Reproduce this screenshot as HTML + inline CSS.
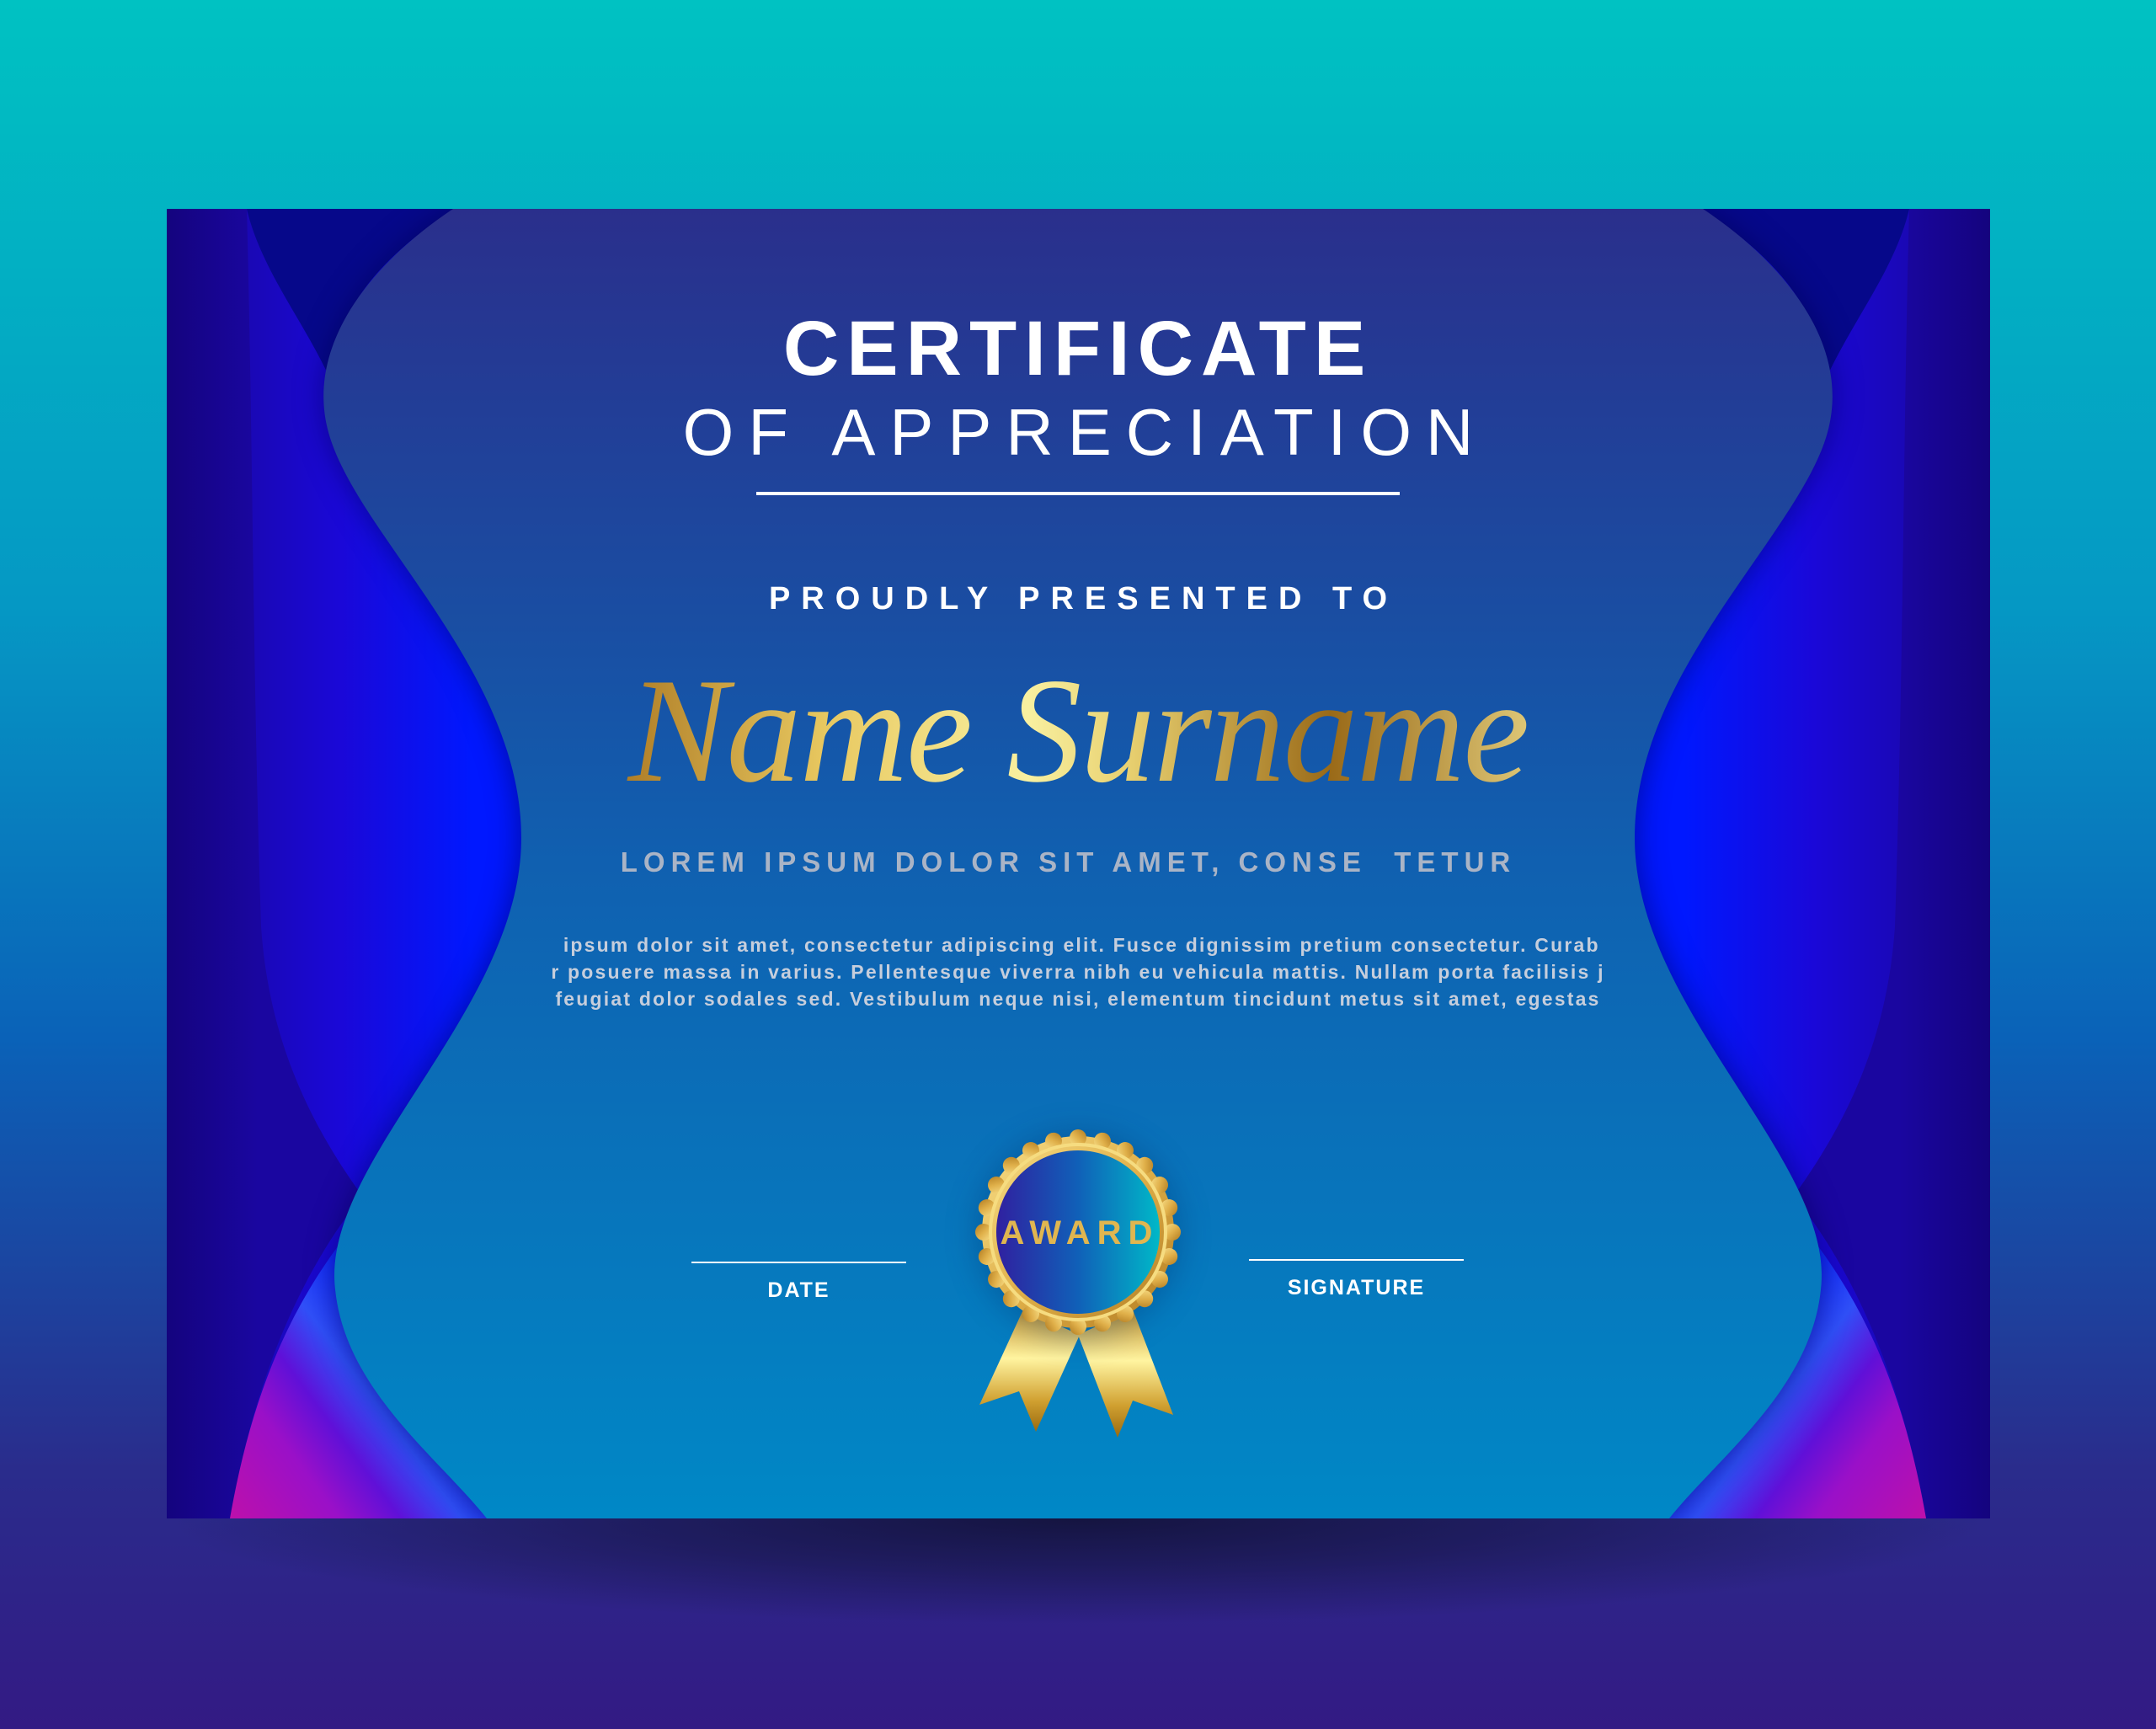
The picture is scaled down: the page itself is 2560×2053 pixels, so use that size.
<!DOCTYPE html>
<html><head><meta charset="utf-8">
<style>
html,body{margin:0;padding:0;}
body{width:2560px;height:2053px;position:relative;overflow:hidden;font-family:"Liberation Sans",sans-serif;}
.t{position:absolute;left:0;width:2560px;text-align:center;white-space:nowrap;}
</style></head><body>
<svg width="2560" height="2053" viewBox="0 0 2560 2053" style="position:absolute;left:0;top:0">
<defs>
<linearGradient id="bg" x1="0" y1="0" x2="0" y2="1">
<stop offset="0" stop-color="#00c2c2"/><stop offset="0.35" stop-color="#0598c4"/>
<stop offset="0.6" stop-color="#0a62b8"/><stop offset="0.85" stop-color="#2a2c8c"/><stop offset="1" stop-color="#331a84"/>
</linearGradient>
<linearGradient id="panel" x1="0" y1="0" x2="0" y2="1">
<stop offset="0" stop-color="#2a2f8c"/><stop offset="0.5" stop-color="#1060b0"/><stop offset="1" stop-color="#0088c6"/>
</linearGradient>
<linearGradient id="card" x1="0" y1="0" x2="1" y2="0">
<stop offset="0" stop-color="#14047e"/><stop offset="0.05" stop-color="#1a06a0"/><stop offset="0.95" stop-color="#1a06a0"/><stop offset="1" stop-color="#14047e"/>
</linearGradient>
<linearGradient id="wave" gradientUnits="userSpaceOnUse" x1="280" y1="0" x2="560" y2="0">
<stop offset="0" stop-color="#1a08b0"/><stop offset="0.45" stop-color="#1a08d8"/><stop offset="1" stop-color="#0018ff"/>
</linearGradient>
<linearGradient id="mag" gradientUnits="userSpaceOnUse" x1="250" y1="1790" x2="560" y2="1560">
<stop offset="0" stop-color="#c010a8"/><stop offset="0.3" stop-color="#9a10c8"/><stop offset="0.45" stop-color="#6010d8"/><stop offset="0.6" stop-color="#3050f8"/><stop offset="0.8" stop-color="#0a22ff"/><stop offset="1" stop-color="#0018ff"/>
</linearGradient>
<linearGradient id="gold" x1="0" y1="0" x2="1" y2="1">
<stop offset="0" stop-color="#f8e08a"/><stop offset="0.5" stop-color="#e0b04a"/><stop offset="1" stop-color="#b07a20"/>
</linearGradient>
<linearGradient id="rib" x1="0" y1="0" x2="0" y2="1">
<stop offset="0" stop-color="#c8962e"/><stop offset="0.4" stop-color="#fff4a0"/><stop offset="0.75" stop-color="#d0a030"/><stop offset="1" stop-color="#9a6a10"/>
</linearGradient>
<linearGradient id="medin" x1="0" y1="0" x2="1" y2="0">
<stop offset="0" stop-color="#3020a0"/><stop offset="0.5" stop-color="#1060b8"/><stop offset="1" stop-color="#00b8c8"/>
</linearGradient>
<radialGradient id="shd" cx="0.5" cy="0" r="0.5">
<stop offset="0" stop-color="#121238" stop-opacity="0.9"/><stop offset="0.5" stop-color="#121238" stop-opacity="0.5"/><stop offset="1" stop-color="#121238" stop-opacity="0"/>
</radialGradient>
<filter id="blur" x="-20%" y="-20%" width="140%" height="140%"><feGaussianBlur stdDeviation="18"/></filter>
<clipPath id="cc"><rect x="198" y="248" width="2165" height="1555"/></clipPath>
</defs>
<rect width="2560" height="2053" fill="url(#bg)"/>
<rect x="200" y="1803" width="2160" height="250" fill="url(#shd)"/>
<rect x="198" y="248" width="2165" height="1555" fill="url(#card)"/>
<g clip-path="url(#cc)">
<g id="side">
<path d="M293,248 L700,248 L700,1803 L273,1803 C300,1650 350,1520 430,1420 C380,1350 320,1250 310,1100 C300,800 300,500 293,248 Z" fill="url(#wave)"/>
<path d="M293,248 L540,248 C460,300 400,360 392,450 C360,380 310,320 293,248 Z" fill="#06088a"/>
<path d="M273,1803 C300,1650 350,1520 470,1400 L600,1380 L700,1803 Z" fill="url(#mag)"/>
</g>
<use href="#side" transform="translate(2560,0) scale(-1,1)"/>
<path d="M538,248 C430,320 360,420 392,520 C430,640 619,800 619,995 C619,1200 380,1380 398,1531 C410,1650 520,1730 578,1803 L1982,1803 C2040,1730 2150,1650 2162,1531 C2180,1380 1941,1200 1941,995 C1941,800 2130,640 2168,520 C2200,420 2130,320 2022,248 Z" fill="#001050" opacity="0.55" filter="url(#blur)"/>
<path d="M538,248 C430,320 360,420 392,520 C430,640 619,800 619,995 C619,1200 380,1380 398,1531 C410,1650 520,1730 578,1803 L1982,1803 C2040,1730 2150,1650 2162,1531 C2180,1380 1941,1200 1941,995 C1941,800 2130,640 2168,520 C2200,420 2130,320 2022,248 Z" fill="url(#panel)"/>
</g>
<!-- lines -->
<rect x="898" y="584" width="764" height="4" fill="#fff"/>
<rect x="821" y="1498" width="255" height="2" fill="#fff"/>
<rect x="1483" y="1495" width="255" height="2" fill="#fff"/>
<!-- medal -->
<path d="M1215,1555 L1163,1668 L1210,1652 L1230,1700 L1282,1585 Z" fill="url(#rib)"/>
<path d="M1345,1555 L1393,1680 L1345,1663 L1327,1707 L1280,1585 Z" fill="url(#rib)"/>
<circle cx="1280" cy="1466" r="122" fill="#003070" opacity="0.35" filter="url(#blur)"/>
<g fill="url(#gold)">
<circle cx="1280" cy="1463" r="114"/>
<g id="b"><circle cx="1392" cy="1463" r="10"/></g>
<use href="#b" transform="rotate(15 1280 1463)"/><use href="#b" transform="rotate(30 1280 1463)"/><use href="#b" transform="rotate(45 1280 1463)"/>
<use href="#b" transform="rotate(60 1280 1463)"/><use href="#b" transform="rotate(75 1280 1463)"/><use href="#b" transform="rotate(90 1280 1463)"/>
<use href="#b" transform="rotate(105 1280 1463)"/><use href="#b" transform="rotate(120 1280 1463)"/><use href="#b" transform="rotate(135 1280 1463)"/>
<use href="#b" transform="rotate(150 1280 1463)"/><use href="#b" transform="rotate(165 1280 1463)"/><use href="#b" transform="rotate(180 1280 1463)"/>
<use href="#b" transform="rotate(195 1280 1463)"/><use href="#b" transform="rotate(210 1280 1463)"/><use href="#b" transform="rotate(225 1280 1463)"/>
<use href="#b" transform="rotate(240 1280 1463)"/><use href="#b" transform="rotate(255 1280 1463)"/><use href="#b" transform="rotate(270 1280 1463)"/>
<use href="#b" transform="rotate(285 1280 1463)"/><use href="#b" transform="rotate(300 1280 1463)"/><use href="#b" transform="rotate(315 1280 1463)"/>
<use href="#b" transform="rotate(330 1280 1463)"/><use href="#b" transform="rotate(345 1280 1463)"/>
</g>
<circle cx="1280" cy="1463" r="104" fill="none" stroke="#f6dc80" stroke-width="4"/>
<circle cx="1280" cy="1463" r="97" fill="url(#medin)"/>
<text x="1282" y="1477" text-anchor="middle" font-family="Liberation Sans" font-weight="bold" font-size="40" letter-spacing="8" fill="#e0b650">AWARD</text>
</svg>

<div class="t" style="top:362px;font-size:92px;font-weight:bold;color:#fff;letter-spacing:9px;">CERTIFICATE</div>
<div class="t" style="top:468px;font-size:78px;color:#fff;letter-spacing:17px;padding-left:17px;box-sizing:border-box;">OF APPRECIATION</div>
<div class="t" style="top:690px;font-size:38px;font-weight:bold;color:#fff;letter-spacing:13px;padding-left:13px;box-sizing:border-box;">PROUDLY PRESENTED TO</div>
<div class="t" style="top:752px;font-family:'Liberation Serif',serif;font-style:italic;font-size:178px;line-height:230px;letter-spacing:-2px;background:linear-gradient(90deg,#a06a18,#e8c860 25%,#f8f0a0 45%,#e8d070 55%,#9a6a18 75%,#f0e090);-webkit-background-clip:text;background-clip:text;color:transparent;left:680px;width:1200px;">Name Surname</div>
<div class="t" style="top:1005px;font-size:33px;font-weight:bold;color:#aab4c6;letter-spacing:7px;padding-right:23px;box-sizing:border-box;">LOREM IPSUM DOLOR SIT AMET, CONSE&nbsp; TETUR</div>
<div class="t" style="top:1106px;font-size:23px;line-height:32px;color:#c6cedc;letter-spacing:2.2px;font-weight:bold;">&nbsp;ipsum dolor sit amet, consectetur adipiscing elit. Fusce dignissim pretium consectetur. Curab<br>r posuere massa in varius. Pellentesque viverra nibh eu vehicula mattis. Nullam porta facilisis j<br>feugiat dolor sodales sed. Vestibulum neque nisi, elementum tincidunt metus sit amet, egestas</div>
<div style="position:absolute;left:821px;width:255px;top:1518px;text-align:center;font-size:25px;font-weight:bold;color:#fff;letter-spacing:2px;">DATE</div>
<div style="position:absolute;left:1483px;width:255px;top:1515px;text-align:center;font-size:25px;font-weight:bold;color:#fff;letter-spacing:2px;">SIGNATURE</div>
</body></html>
